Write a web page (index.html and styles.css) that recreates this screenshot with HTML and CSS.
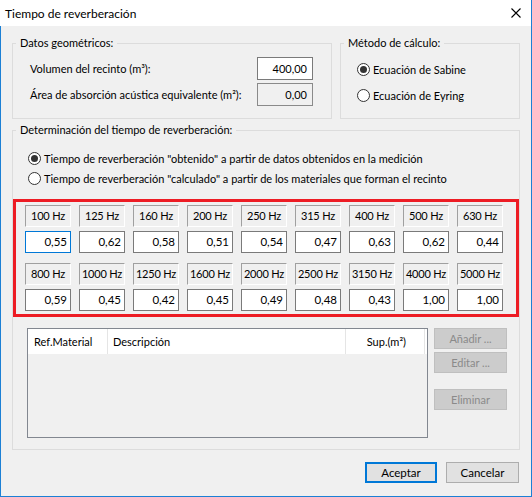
FILE: index.html
```html
<!DOCTYPE html>
<html lang="es">
<head>
<meta charset="utf-8">
<title>Tiempo de reverberación</title>
<link rel="stylesheet" href="styles.css">
</head>
<body>
<div class="window">
  <div class="titlebar">
    <span class="title">Tiempo de reverberación</span>
    <svg class="close" width="10" height="10" viewBox="0 0 10 10"><path d="M0.5 0.5 L9.5 9.5 M9.5 0.5 L0.5 9.5" stroke="#000" stroke-width="1.1" fill="none"/></svg>
  </div>
  <div class="body">
    <div class="toprow">
      <fieldset class="group geo">
        <legend>Datos geométricos:</legend>
        <div class="geo-inner">
          <div class="field-row"><span>Volumen del recinto (m³):</span><div class="tb">400,00</div></div>
          <div class="field-row"><span>Área de absorción acústica equivalente (m²):</span><div class="tb disabled">0,00</div></div>
        </div>
      </fieldset>
      <fieldset class="group method">
        <legend>Método de cálculo:</legend>
        <div class="method-inner">
          <div class="radio"><span class="rb checked"></span>Ecuación de Sabine</div>
          <div class="radio"><span class="rb"></span>Ecuación de Eyring</div>
        </div>
      </fieldset>
    </div>
    <fieldset class="group det">
      <legend>Determinación del tiempo de reverberación:</legend>
      <div class="det-inner">
        <div class="det-radios">
          <div class="radio short"><span class="rb checked"></span>Tiempo de reverberación "obtenido" a partir de datos obtenidos en la medición</div>
          <div class="radio short"><span class="rb"></span>Tiempo de reverberación "calculado" a partir de los materiales que forman el recinto</div>
        </div>
        <div class="redbox">
          <div class="freqgrid">
            <div class="flabel">100 Hz</div><div class="flabel">125 Hz</div><div class="flabel">160 Hz</div><div class="flabel">200 Hz</div><div class="flabel">250 Hz</div><div class="flabel">315 Hz</div><div class="flabel">400 Hz</div><div class="flabel">500 Hz</div><div class="flabel">630 Hz</div>
            <div class="fval focus">0,55</div><div class="fval">0,62</div><div class="fval">0,58</div><div class="fval">0,51</div><div class="fval">0,54</div><div class="fval">0,47</div><div class="fval">0,63</div><div class="fval">0,62</div><div class="fval">0,44</div>
          </div>
          <div class="freqgrid">
            <div class="flabel">800 Hz</div><div class="flabel">1000 Hz</div><div class="flabel">1250 Hz</div><div class="flabel">1600 Hz</div><div class="flabel">2000 Hz</div><div class="flabel">2500 Hz</div><div class="flabel">3150 Hz</div><div class="flabel">4000 Hz</div><div class="flabel">5000 Hz</div>
            <div class="fval">0,59</div><div class="fval">0,45</div><div class="fval">0,42</div><div class="fval">0,45</div><div class="fval">0,49</div><div class="fval">0,48</div><div class="fval">0,43</div><div class="fval">1,00</div><div class="fval">1,00</div>
          </div>
        </div>
        <div class="listrow">
          <div class="listview">
            <div class="lv-header">
              <div class="lv-col c1">Ref.Material</div>
              <div class="lv-col c2">Descripción</div>
              <div class="lv-col c3">Sup.(m²)</div>
            </div>
          </div>
          <div class="sidebtns">
            <div class="btn dis">Añadir ...</div>
            <div class="btn dis">Editar ...</div>
            <div class="btn dis gap">Eliminar</div>
          </div>
        </div>
      </div>
    </fieldset>
  </div>
  <div class="footer">
    <div class="btn default">Aceptar</div>
    <div class="btn normal">Cancelar</div>
  </div>
</div>
</body>
</html>
```
FILE: styles.css
```css
html, body {
  margin: 0;
  padding: 0;
  background: #f0f0f0;
}
body {
  font-family: Lato, "Liberation Sans", sans-serif;
  font-size: 11px;
  color: #000;
}
.window {
  width: 532px;
  height: 497px;
  box-sizing: border-box;
  border: 1px solid #1c80d5;
  border-top: 0;
  background: #f0f0f0;
  display: flex;
  flex-direction: column;
}
.titlebar {
  height: 26px;
  margin-left: -1px;
  background: #fff;
  display: flex;
  align-items: center;
  justify-content: space-between;
  padding: 0 10px 0 5px;
}
.title {
  font-size: 12px;
}
.close {
  display: block;
}
.body {
  padding: 9px 11px 0 11px;
}
.toprow {
  display: flex;
  gap: 8px;
}
.group {
  margin: 0;
  padding: 0;
  border: 1px solid #dcdcdc;
  min-width: 0;
  box-sizing: border-box;
}
.group legend {
  padding: 0 4px;
  margin-left: 3px;
  line-height: 16px;
  font-size: 11px;
}
.geo {
  width: 320px;
}
.method {
  width: 180px;
}
.geo-inner {
  padding: 6px 18px 12px 17px;
  display: flex;
  flex-direction: column;
  gap: 3px;
}
.field-row {
  display: flex;
  justify-content: space-between;
  align-items: center;
  height: 23px;
  white-space: nowrap;
}
.tb {
  width: 56px;
  height: 23px;
  box-sizing: border-box;
  border: 1px solid #7a7a7a;
  background: #fff;
  text-align: right;
  padding-right: 5px;
  line-height: 21px;
}
.tb.disabled {
  background: #f0f0f0;
  border-color: #8a8a8a;
}
.method-inner {
  padding: 5px 0 0 16px;
  display: flex;
  flex-direction: column;
}
.radio {
  display: flex;
  align-items: center;
  gap: 3px;
  height: 26px;
  white-space: nowrap;
}
.radio.short {
  height: 20px;
}
.rb {
  width: 13px;
  height: 13px;
  box-sizing: border-box;
  border: 1px solid #333;
  border-radius: 50%;
  background: #fff;
  display: flex;
  align-items: center;
  justify-content: center;
  flex: none;
}
.rb.checked::after {
  content: "";
  width: 7px;
  height: 7px;
  border-radius: 50%;
  background: #333;
}
.det {
  width: 508px;
  margin-top: 3px;
}
.det-inner {
  padding: 10px 0 11px 0;
}
.det-radios {
  padding-left: 15px;
}
.redbox {
  margin-top: 11px;
  width: 506px;
  box-sizing: border-box;
  border: 3px solid #ed1c24;
  padding: 3px 12px 3px 9px;
  display: flex;
  flex-direction: column;
  gap: 10px;
}
.freqgrid {
  display: grid;
  grid-template-columns: repeat(9, 46px);
  grid-auto-rows: 22px;
  column-gap: 8px;
  row-gap: 4px;
}
.flabel {
  box-sizing: border-box;
  border-top: 1px solid #a0a0a0;
  border-left: 1px solid #a0a0a0;
  border-right: 1px solid #fff;
  border-bottom: 1px solid #fff;
  text-align: center;
  line-height: 20px;
  white-space: nowrap;
  letter-spacing: -0.2px;
}
.fval {
  box-sizing: border-box;
  border: 1px solid #7a7a7a;
  background: #fff;
  text-align: right;
  padding-right: 3px;
  line-height: 20px;
  font-size: 11.5px;
}
.fval.focus {
  border-color: #0078d7;
}
.listrow {
  margin: 11px 0 0 14px;
  display: flex;
  gap: 6px;
  height: 110px;
}
.listview {
  width: 401px;
  box-sizing: border-box;
  border: 1px solid #828790;
  background: #f0f0f0;
}
.lv-header {
  display: flex;
  height: 25px;
  background: #fff;
}
.lv-col {
  box-sizing: border-box;
  border-right: 1px solid #e5e5e5;
  line-height: 25px;
  white-space: nowrap;
}
.c1 {
  width: 80px;
  padding-left: 6px;
}
.c2 {
  width: 238px;
  padding-left: 5px;
}
.c3 {
  width: 79px;
  text-align: right;
  padding-right: 18px;
}
.sidebtns {
  display: flex;
  flex-direction: column;
  gap: 3px;
}
.btn {
  box-sizing: border-box;
  height: 21px;
  line-height: 19px;
  text-align: center;
  white-space: nowrap;
}
.btn.dis {
  width: 73px;
  background: #cccccc;
  border: 1px solid #bfbfbf;
  color: #8a8a8a;
}
.btn.gap {
  margin-top: 13px;
}
.footer {
  display: flex;
  justify-content: flex-end;
  gap: 9px;
  padding: 12px 12px 0 0;
}
.btn.default {
  width: 72px;
  background: #e1e1e1;
  border: 2px solid #0078d7;
  line-height: 17px;
  font-size: 11.5px;
}
.btn.normal {
  width: 73px;
  background: #e1e1e1;
  border: 1px solid #adadad;
  font-size: 11.5px;
}
```
